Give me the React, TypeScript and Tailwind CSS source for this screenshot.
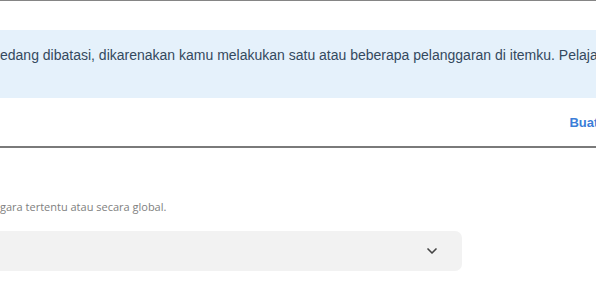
import { ChevronDown } from 'lucide-react';

// Text cut off at the left edge: the hidden start sits in a zero-width box and spills leftwards
function Clipped({ hidden, visible }: { hidden: string; visible: string }) {
  return (
    <div className="flex whitespace-nowrap">
      <span className="flex w-0 shrink-0 justify-end">{hidden}</span>
      <span>{visible}</span>
    </div>
  );
}

export default function App() {
  return (
    <div className="w-[596px] h-[298px] overflow-hidden bg-white">
      {/* Notice panel */}
      <div className="h-[148px] border-t border-b-2 border-t-[#858585] border-b-[#7a7a7a] bg-white">
        <div className="mt-[29px] h-[68px] bg-[#e5f1fb] pt-[15px] text-[14px] leading-[20px] text-[#34495e] font-['Liberation_Sans',Arial,sans-serif] overflow-hidden">
          <Clipped
            hidden="Akun kamu s"
            visible="edang dibatasi, dikarenakan kamu melakukan satu atau beberapa pelanggaran di itemku. Pelajari selengkapnya"
          />
        </div>
        <div className="mt-[17px] flex justify-end overflow-hidden">
          <span className="-mr-[36px] whitespace-nowrap text-[13px] leading-[16px] font-bold text-[#3b7ed8] font-['Liberation_Sans',Arial,sans-serif]">
            Buat Tiket
          </span>
        </div>
      </div>

      {/* Region section */}
      <div className="font-['Open_Sans','Noto_Sans',sans-serif]">
        <div className="mt-[51px] text-[11px] leading-[15px] text-[#808080]">
          <Clipped hidden="Pilih apakah produk dijual di ne" visible="gara tertentu atau secara global." />
        </div>
        <div className="mt-[17px] -ml-[20px] flex h-[40px] w-[482px] items-center justify-end rounded-[7px] bg-[#f2f2f2] pr-[22px]">
          <ChevronDown className="h-[16px] w-[16px] text-[#444444]" strokeWidth={2.5} />
        </div>
      </div>
    </div>
  );
}
